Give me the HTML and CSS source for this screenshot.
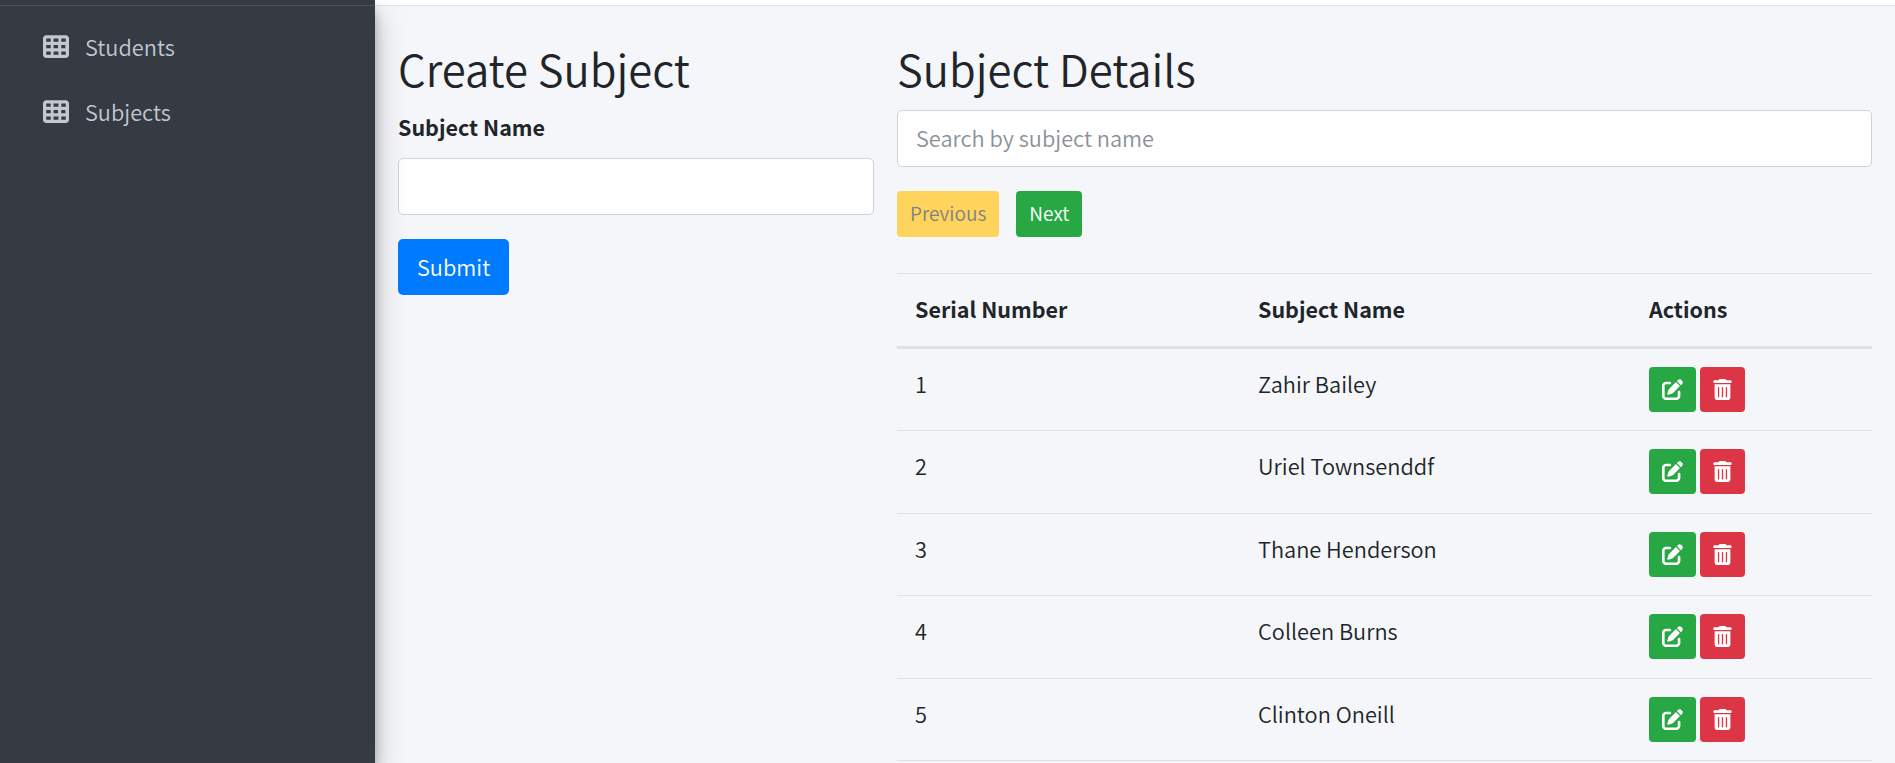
FILE: index.html
```html
<!DOCTYPE html>
<html lang="en">
<head>
<meta charset="utf-8">
<title>Subjects</title>
<link rel="stylesheet" href="styles.css">
</head>
<body>
<svg class="defs" width="0" height="0" aria-hidden="true">
  <symbol id="grid" viewBox="0 32 512 448"><path d="M64 32C28.700 32 0 60.700 0 96V416c0 35.300 28.700 64 64 64H448c35.300 0 64-28.700 64-64V96c0-35.300-28.700-64-64-64H64zm88 64v64H64V96h88zm56 0h96v64H208V96zm240 0v64H360V96h88zM64 224h88v64H64V224zm232 0v64H208V224h96zm56 0h88v64H360V224zM152 352v64H64V352h88zm56 0h96v64H208V352zm240 0v64H360V352h88z"/></symbol>
  <symbol id="edit" viewBox="0 0 512 512"><path d="M471.600 21.700c-21.900-21.900-57.300-21.900-79.200 0L362.300 51.700l97.900 97.900 30.100-30.100c21.900-21.900 21.900-57.300 0-79.200L471.600 21.700zm-299.200 220c-6.100 6.100-10.800 13.600-13.500 21.900l-29.600 88.800c-2.900 8.600-.6 18.100 5.800 24.600s15.900 8.700 24.600 5.800l88.800-29.600c8.200-2.700 15.700-7.400 21.900-13.500L437.700 172.300 339.700 74.300 172.400 241.700zM96 64C43 64 0 107 0 160V416c0 53 43 96 96 96H352c53 0 96-43 96-96V320c0-17.700-14.300-32-32-32s-32 14.300-32 32v96c0 17.700-14.300 32-32 32H96c-17.700 0-32-14.300-32-32V160c0-17.700 14.300-32 32-32h96c17.700 0 32-14.300 32-32s-14.300-32-32-32H96z"/></symbol>
  <symbol id="trash" viewBox="0 0 448 512"><path d="M135.200 17.700C140.600 6.800 151.700 0 163.800 0H284.200c12.100 0 23.200 6.800 28.600 17.700L320 32h96c17.700 0 32 14.300 32 32s-14.300 32-32 32H32C14.300 96 0 81.700 0 64S14.300 32 32 32h96l7.200-14.300zM32 128H416V448c0 35.300-28.700 64-64 64H96c-35.300 0-64-28.700-64-64V128zm96 64c-8.800 0-16 7.200-16 16V432c0 8.800 7.200 16 16 16s16-7.200 16-16V208c0-8.800-7.200-16-16-16zm96 0c-8.800 0-16 7.200-16 16V432c0 8.800 7.200 16 16 16s16-7.200 16-16V208c0-8.800-7.200-16-16-16zm96 0c-8.800 0-16 7.200-16 16V432c0 8.800 7.200 16 16 16s16-7.200 16-16V208c0-8.800-7.200-16-16-16z"/></symbol>
</svg>
<div class="app">
  <aside class="sidebar">
    <nav class="nav">
      <a class="nav-link" href="#"><svg class="nav-icon"><use href="#grid"/></svg><span>Students</span></a>
      <a class="nav-link" href="#"><svg class="nav-icon"><use href="#grid"/></svg><span>Subjects</span></a>
    </nav>
  </aside>
  <main class="main">
    <div class="topbar"></div>
    <div class="content">
      <section class="col-create">
        <h2 class="title">Create Subject</h2>
        <label class="label" for="subject">Subject Name</label>
        <input class="input" id="subject" type="text">
        <button class="btn btn-submit" type="button">Submit</button>
      </section>
      <section class="col-list">
        <h2 class="title">Subject Details</h2>
        <input class="input" type="text" placeholder="Search by subject name">
        <div class="pager">
          <button class="btn-sm btn-prev" type="button">Previous</button>
          <button class="btn-sm btn-next" type="button">Next</button>
        </div>
        <table class="table">
          <thead><tr><th class="c1">Serial Number</th><th class="c2">Subject Name</th><th>Actions</th></tr></thead>
          <tbody>
            <tr><td>1</td><td>Zahir Bailey</td><td><div class="actions"><button class="act act-edit" type="button"><svg class="ic-edit"><use href="#edit"/></svg></button><button class="act act-del" type="button"><svg class="ic-trash"><use href="#trash"/></svg></button></div></td></tr>
            <tr><td>2</td><td>Uriel Townsenddf</td><td><div class="actions"><button class="act act-edit" type="button"><svg class="ic-edit"><use href="#edit"/></svg></button><button class="act act-del" type="button"><svg class="ic-trash"><use href="#trash"/></svg></button></div></td></tr>
            <tr><td>3</td><td>Thane Henderson</td><td><div class="actions"><button class="act act-edit" type="button"><svg class="ic-edit"><use href="#edit"/></svg></button><button class="act act-del" type="button"><svg class="ic-trash"><use href="#trash"/></svg></button></div></td></tr>
            <tr><td>4</td><td>Colleen Burns</td><td><div class="actions"><button class="act act-edit" type="button"><svg class="ic-edit"><use href="#edit"/></svg></button><button class="act act-del" type="button"><svg class="ic-trash"><use href="#trash"/></svg></button></div></td></tr>
            <tr><td>5</td><td>Clinton Oneill</td><td><div class="actions"><button class="act act-edit" type="button"><svg class="ic-edit"><use href="#edit"/></svg></button><button class="act act-del" type="button"><svg class="ic-trash"><use href="#trash"/></svg></button></div></td></tr>
          </tbody>
        </table>
      </section>
    </div>
  </main>
</div>
</body>
</html>
```
FILE: styles.css
```css
* { box-sizing: border-box; }
html, body { margin: 0; height: 100%; overflow: hidden; }
body { font-family: "Noto Sans CJK SC", "Source Sans Pro", sans-serif; font-size: 21.750px; font-weight: 350; line-height: 33.6px; color: #212529; background: #f4f6f9; }
.defs { position: absolute; }
.app { display: flex; height: 763px; }
.sidebar { width: 375px; flex: none; background: #353a43; padding-top: 13px; box-shadow: 0 14px 28px rgba(0,0,0,.25), 0 10px 10px rgba(0,0,0,.22); position: relative; z-index: 2; border-top: 1px solid transparent; }
.sidebar::before { content: ""; position: absolute; left: 0; right: 0; top: 4px; height: 1px; background: #4b545c; }
.nav { display: flex; flex-direction: column; }
.nav-link { display: flex; align-items: center; height: 65px; padding-left: 43px; color: #c2c7d0; text-decoration: none; }
.nav-icon { width: 26px; height: 23px; fill: #c2c7d0; margin-right: 16px; }
.main { flex: 1; min-width: 0; }
.topbar { height: 6px; background: #fff; border-bottom: 1px solid #dee2e6; }
.content { display: flex; padding: 35px 23px 0 23px; gap: 23px; }
.col-create { width: 476px; flex: none; }
.col-list { flex: 1; min-width: 0; }
.title { margin: 0 0 15px; font-size: 43.600px; font-weight: 350; line-height: 54px; }
.label { display: block; font-weight: 700; font-size: 21.500px; margin-bottom: 14px; }
.input { display: block; width: 100%; height: 57px; padding: 0 18px 2px; border: 1px solid #ced4da; border-radius: 5px; background: #fff; font: inherit; color: #495057; }
.input::placeholder { color: #8a9299; opacity: 1; }
.btn { display: block; margin-top: 24px; height: 56px; padding: 0 19px; border: 0; border-radius: 5px; background: #007bff; color: #fff; font: inherit; }
.pager { display: flex; gap: 17px; margin-top: 24px; }
.btn-sm { height: 46px; padding: 0 13px 3px; border: 0; border-radius: 4px; font-family: inherit; font-size: 19.100px; font-weight: 350; }
.btn-prev { background: #ffd45c; color: #7f8284; }
.btn-next { background: #28a745; color: #fff; }
.table { width: 100%; margin-top: 36px; border-collapse: collapse; table-layout: fixed; }
.c1 { width: 343px; }
.c2 { width: 391px; }
.table th, .table td { text-align: left; border-top: 1px solid #dee2e6; }
.table td { padding: 18px 18px 0; height: 82.4px; vertical-align: top; }
.table th { height: 74px; padding: 0 18px 2px; border-bottom: 3px solid #dee2e6; font-weight: 700; font-size: 21.500px; vertical-align: middle; }
.table tbody tr:first-child td { border-top: 0; height: 83.4px; }
.table tbody tr { border-bottom: 1px solid #dee2e6; }
.actions { display: flex; gap: 4px; }
.act { display: flex; align-items: center; justify-content: center; height: 45px; border: 0; border-radius: 4px; padding: 0; }
.act-edit { width: 47px; background: #28a745; }
.act-del { width: 45px; background: #dc3545; }
.ic-edit { width: 21px; height: 21px; fill: #fff; }
.ic-trash { width: 19px; height: 21px; fill: #fff; }
```
